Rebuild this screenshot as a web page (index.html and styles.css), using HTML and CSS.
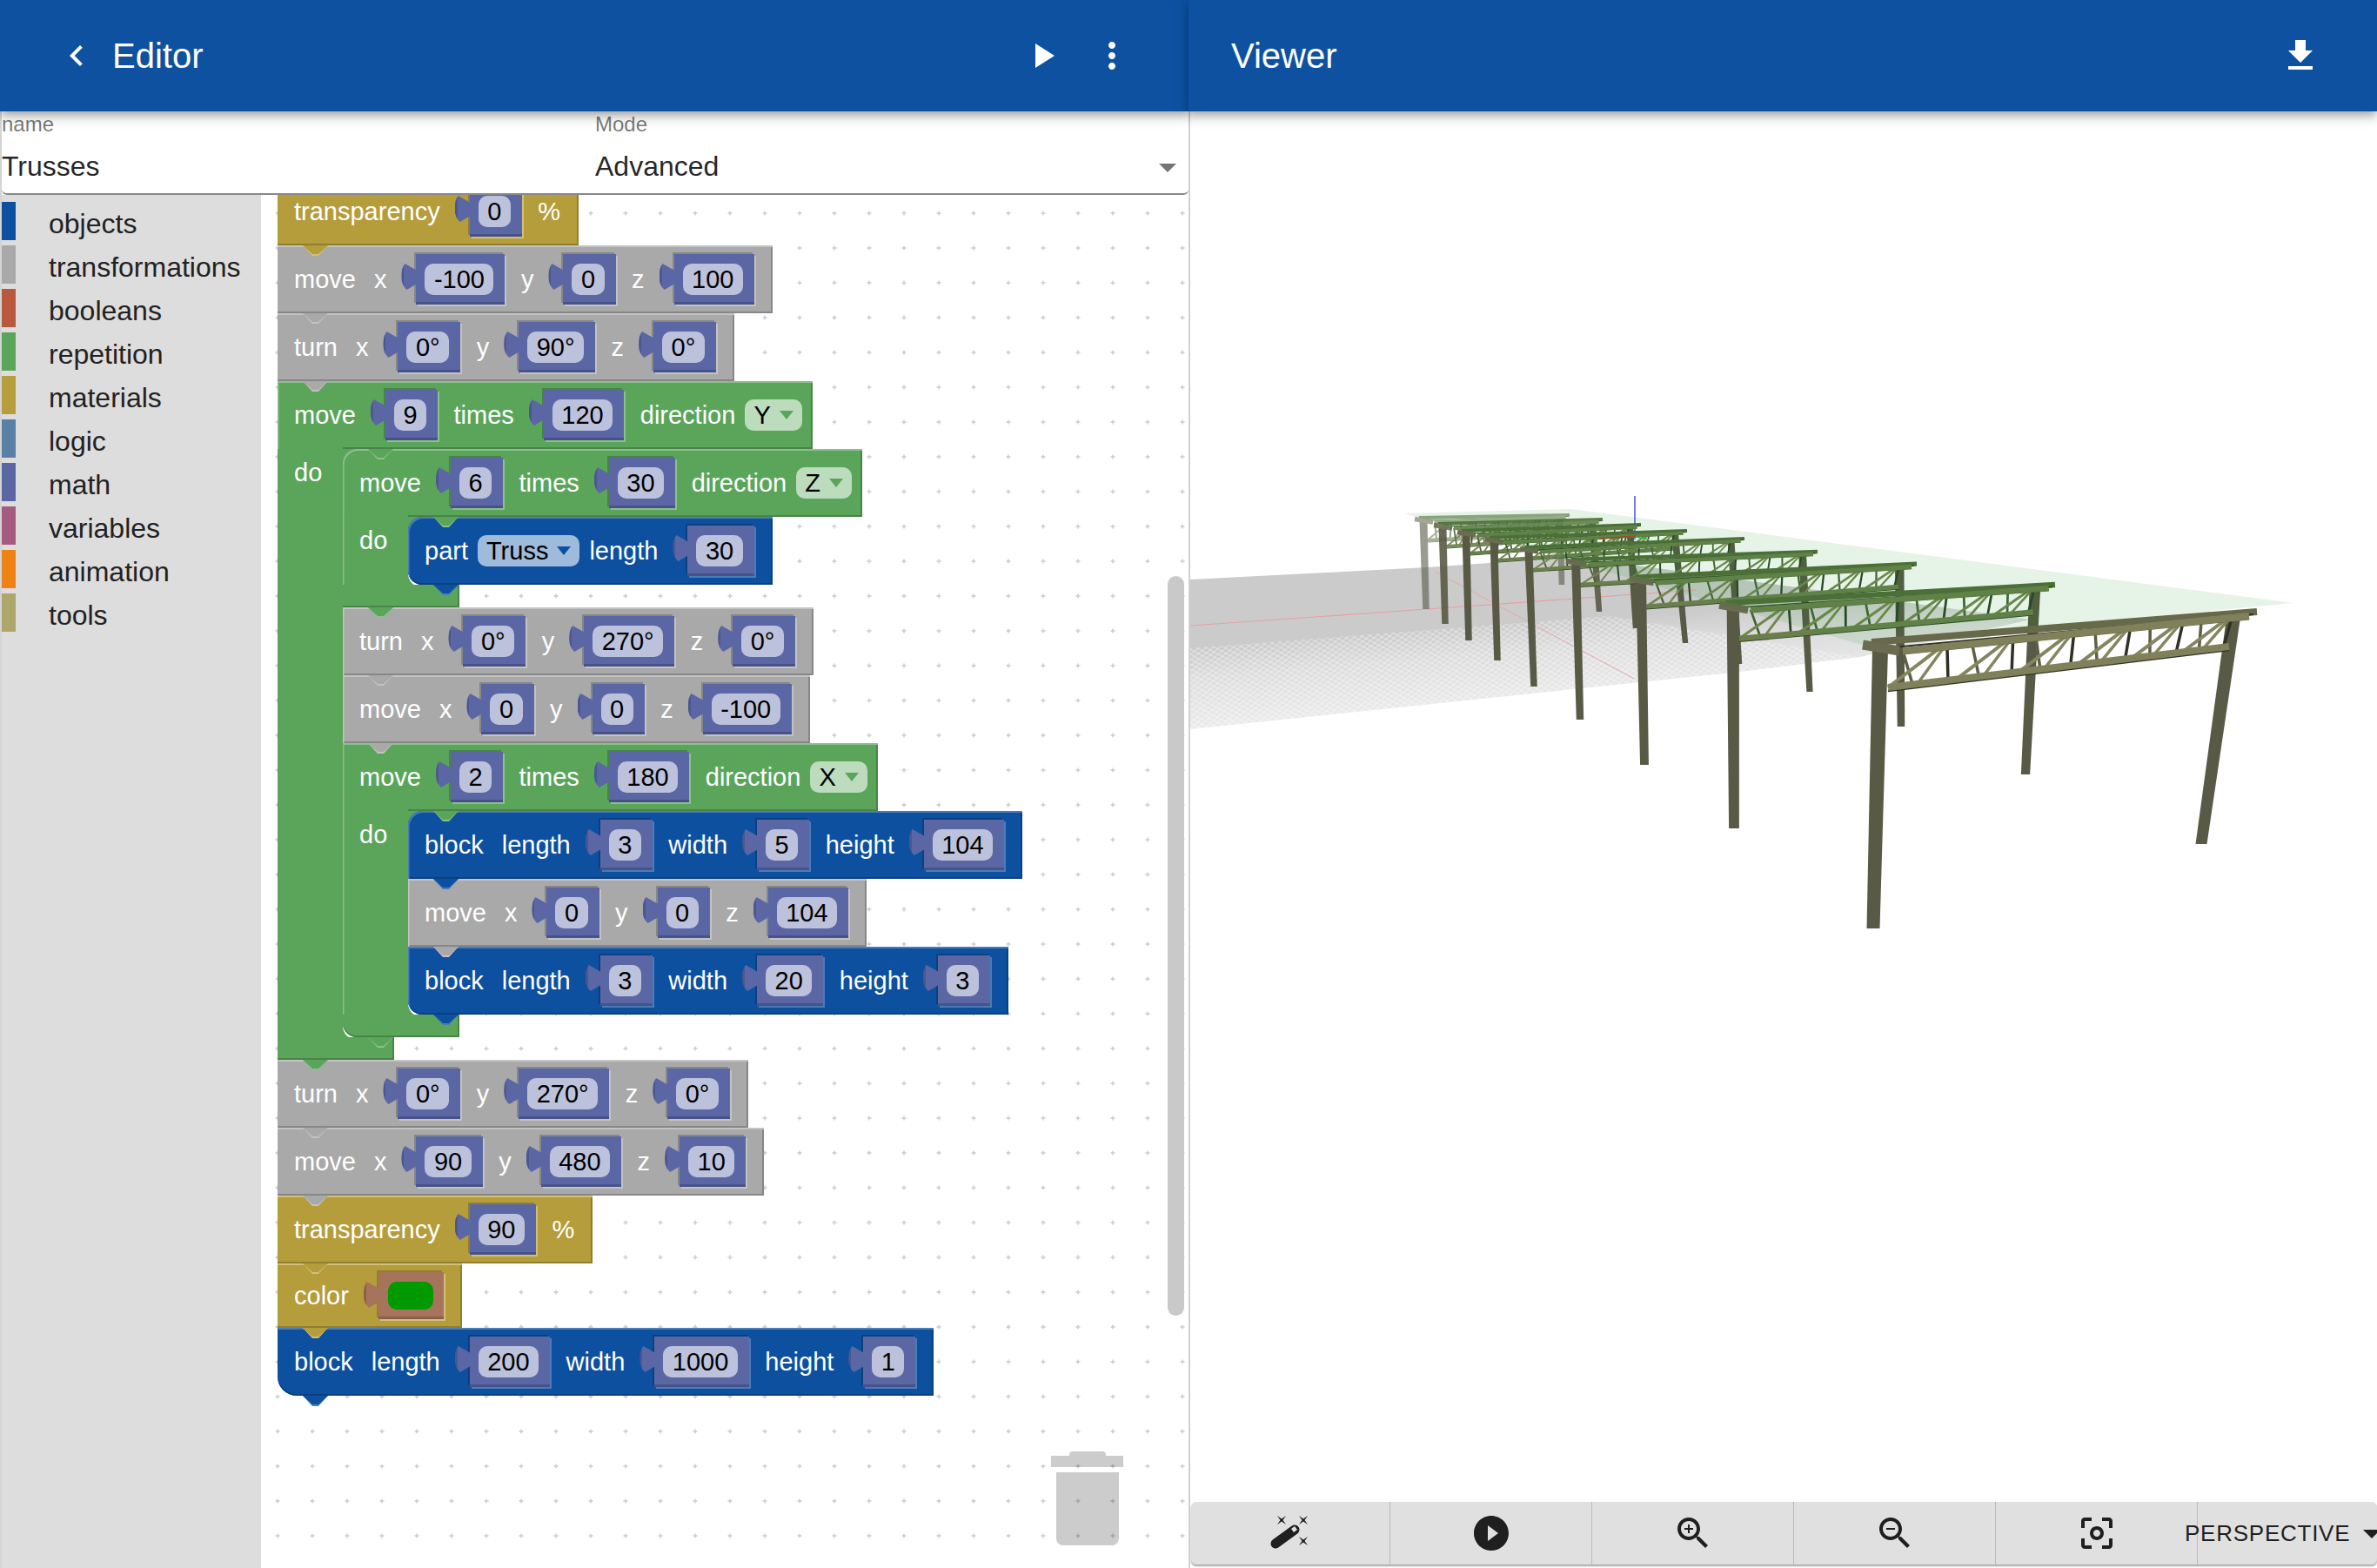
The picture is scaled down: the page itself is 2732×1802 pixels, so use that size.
FILE: index.html
```html
<!DOCTYPE html>
<html lang="en">
<head>
  <meta charset="UTF-8">
  <title>Trusses</title>
  <link rel="stylesheet" href="styles.css">
</head>
<body>
  <div class="app">

    <!-- Left: block editor -->
    <section class="editor">
      <header class="appbar">
        <svg class="icon back" viewBox="0 0 24 24"><path d="M15.41 7.41L14 6l-6 6 6 6 1.41-1.41L10.83 12z"/></svg>
        <h1 class="title">Editor</h1>
        <svg class="icon run" viewBox="0 0 24 24"><path d="M8 5v14l11-7z"/></svg>
        <svg class="icon more" viewBox="0 0 24 24"><path d="M12 8c1.1 0 2-.9 2-2s-.9-2-2-2-2 .9-2 2 .9 2 2 2zm0 2c-1.1 0-2 .9-2 2s.9 2 2 2 2-.9 2-2-.9-2-2-2zm0 6c-1.1 0-2 .9-2 2s.9 2 2 2 2-.9 2-2-.9-2-2-2z"/></svg>
      </header>

      <div class="form">
        <div class="form-field name-field">
          <label class="form-label">name</label>
          <div class="form-value">Trusses</div>
        </div>
        <div class="form-field mode-field">
          <label class="form-label">Mode</label>
          <div class="form-value">Advanced</div>
          <svg class="select-arrow" viewBox="0 0 24 24"><path d="M7 10l5 5 5-5z"/></svg>
        </div>
      </div>

      <div class="main">
        <ul class="toolbox">
          <li class="cat"><i class="swatch c-objects"></i>objects</li>
          <li class="cat"><i class="swatch c-transformations"></i>transformations</li>
          <li class="cat"><i class="swatch c-booleans"></i>booleans</li>
          <li class="cat"><i class="swatch c-repetition"></i>repetition</li>
          <li class="cat"><i class="swatch c-materials"></i>materials</li>
          <li class="cat"><i class="swatch c-logic"></i>logic</li>
          <li class="cat"><i class="swatch c-math"></i>math</li>
          <li class="cat"><i class="swatch c-variables"></i>variables</li>
          <li class="cat"><i class="swatch c-animation"></i>animation</li>
          <li class="cat"><i class="swatch c-tools"></i>tools</li>
        </ul>

        <div class="workspace">
          <svg class="grid">
            <defs>
              <pattern id="dots" width="40" height="40" patternUnits="userSpaceOnUse">
                <path d="M16.5 21h5M19 18.5v5" stroke="#ccc" stroke-width="1.4" fill="none"/>
              </pattern>
            </defs>
            <rect width="100%" height="100%" fill="url(#dots)"/>
          </svg>

          <div class="canvas">
            <div class="block gold"><span class="lbl">transparency</span><span class="slot"><span class="field">0</span></span><span class="lbl">%</span></div>
            <div class="block gray"><span class="lbl">move</span><span class="lbl">x</span><span class="slot"><span class="field">-100</span></span><span class="lbl">y</span><span class="slot"><span class="field">0</span></span><span class="lbl">z</span><span class="slot"><span class="field">100</span></span></div>
            <div class="block gray"><span class="lbl">turn</span><span class="lbl">x</span><span class="slot"><span class="field">0°</span></span><span class="lbl">y</span><span class="slot"><span class="field">90°</span></span><span class="lbl">z</span><span class="slot"><span class="field">0°</span></span></div>

            <div class="c green">
              <div class="block"><span class="lbl">move</span><span class="slot"><span class="field">9</span></span><span class="lbl">times</span><span class="slot"><span class="field">120</span></span><span class="lbl">direction</span><span class="drop">Y<i class="caret"></i></span></div>
              <div class="do">
                <span class="do-label">do</span>
                <div class="stmts">
                  <div class="c green">
                    <div class="block"><span class="lbl">move</span><span class="slot"><span class="field">6</span></span><span class="lbl">times</span><span class="slot"><span class="field">30</span></span><span class="lbl">direction</span><span class="drop">Z<i class="caret"></i></span></div>
                    <div class="do">
                      <span class="do-label">do</span>
                      <div class="stmts">
                        <div class="block blue"><span class="lbl">part</span><span class="drop">Truss<i class="caret"></i></span><span class="lbl">length</span><span class="slot"><span class="field">30</span></span></div>
                      </div>
                    </div>
                    <div class="foot"></div>
                  </div>
                  <div class="block gray"><span class="lbl">turn</span><span class="lbl">x</span><span class="slot"><span class="field">0°</span></span><span class="lbl">y</span><span class="slot"><span class="field">270°</span></span><span class="lbl">z</span><span class="slot"><span class="field">0°</span></span></div>
                  <div class="block gray"><span class="lbl">move</span><span class="lbl">x</span><span class="slot"><span class="field">0</span></span><span class="lbl">y</span><span class="slot"><span class="field">0</span></span><span class="lbl">z</span><span class="slot"><span class="field">-100</span></span></div>
                  <div class="c green">
                    <div class="block"><span class="lbl">move</span><span class="slot"><span class="field">2</span></span><span class="lbl">times</span><span class="slot"><span class="field">180</span></span><span class="lbl">direction</span><span class="drop">X<i class="caret"></i></span></div>
                    <div class="do">
                      <span class="do-label">do</span>
                      <div class="stmts">
                        <div class="block blue"><span class="lbl">block</span><span class="lbl">length</span><span class="slot"><span class="field">3</span></span><span class="lbl">width</span><span class="slot"><span class="field">5</span></span><span class="lbl">height</span><span class="slot"><span class="field">104</span></span></div>
                        <div class="block gray"><span class="lbl">move</span><span class="lbl">x</span><span class="slot"><span class="field">0</span></span><span class="lbl">y</span><span class="slot"><span class="field">0</span></span><span class="lbl">z</span><span class="slot"><span class="field">104</span></span></div>
                        <div class="block blue"><span class="lbl">block</span><span class="lbl">length</span><span class="slot"><span class="field">3</span></span><span class="lbl">width</span><span class="slot"><span class="field">20</span></span><span class="lbl">height</span><span class="slot"><span class="field">3</span></span></div>
                      </div>
                    </div>
                    <div class="foot"></div>
                  </div>
                </div>
              </div>
              <div class="foot"></div>
            </div>

            <div class="block gray"><span class="lbl">turn</span><span class="lbl">x</span><span class="slot"><span class="field">0°</span></span><span class="lbl">y</span><span class="slot"><span class="field">270°</span></span><span class="lbl">z</span><span class="slot"><span class="field">0°</span></span></div>
            <div class="block gray"><span class="lbl">move</span><span class="lbl">x</span><span class="slot"><span class="field">90</span></span><span class="lbl">y</span><span class="slot"><span class="field">480</span></span><span class="lbl">z</span><span class="slot"><span class="field">10</span></span></div>
            <div class="block gold"><span class="lbl">transparency</span><span class="slot"><span class="field">90</span></span><span class="lbl">%</span></div>
            <div class="block gold short"><span class="lbl">color</span><span class="slot color-slot"><span class="field color-field"></span></span></div>
            <div class="block blue end"><span class="lbl">block</span><span class="lbl">length</span><span class="slot"><span class="field">200</span></span><span class="lbl">width</span><span class="slot"><span class="field">1000</span></span><span class="lbl">height</span><span class="slot"><span class="field">1</span></span></div>
          </div>

          <div class="scrollbar"></div>
          <div class="trash">
            <i class="trash-handle"></i>
            <i class="trash-lid"></i>
            <i class="trash-body"></i>
          </div>
        </div>
      </div>
    </section>

    <!-- Right: 3D viewer -->
    <section class="viewer">
      <header class="appbar">
        <h1 class="title viewer-title">Viewer</h1>
        <svg class="icon download" viewBox="0 0 24 24"><path d="M19 9h-4V3H9v6H5l7 7 7-7zM5 18v2h14v-2H5z"/></svg>
      </header>

      <div class="stage">
        <svg class="scene" viewBox="1368 128 1364 1598">
          <defs>
            <linearGradient id="floor" gradientUnits="userSpaceOnUse" x1="1620" y1="690" x2="1630" y2="815">
              <stop offset="0.3" stop-color="#cbcbcb"/>
              <stop offset="0.55" stop-color="#dcdcdc"/>
              <stop offset="1" stop-color="#eaeaea"/>
            </linearGradient>
            <pattern id="mesh" width="9" height="6" patternUnits="userSpaceOnUse" patternTransform="rotate(-6)">
              <path d="M0 0L9 6M9 0L0 6" stroke="#fff" stroke-width="1" fill="none"/>
            </pattern>
          </defs>
          <polygon points="1368,666 1640,652 1810,640 2335,712 2138,755 2000,772 1368,838" fill="url(#floor)"/>
          <polygon points="1368,745 1850,708 2138,755 2000,772 1368,838" fill="url(#mesh)" opacity="0.55"/>
          <path d="M1368 719L1640 700L1950 678" stroke="#e8a0a0" stroke-width="1.2" fill="none"/>
          <path d="M1650 657L1878 780" stroke="#e8a8a8" stroke-width="1" fill="none"/>
          <path d="M1879 570V620" stroke="#3b46d8" stroke-width="1.4" fill="none"/>
          <g id="frames-back"></g>
          <path d="M1838 619L1880 616" stroke="#c0392b" stroke-width="1.6" fill="none"/>
          <path d="M1880 617L1895 620" stroke="#36c24a" stroke-width="1.6" fill="none"/>
          <polygon points="1614,590 1806,585 2636,693 2140,741" fill="#0a961e" opacity="0.1"/>
          <g id="frames-front"></g>
        </svg>
      </div>

      <div class="toolbar">
        <div class="tool">
          <svg class="tool-icon" viewBox="0 0 48 48">
            <path d="M7 36L29 20" stroke="#1f1f1f" stroke-width="11" stroke-linecap="round" fill="none"/>
            <path d="M25 19L29 16L32 20L28 23Z" fill="#e0e0e0"/>
            <path d="M9 4L14 7.500L19 4L15.500 9L19 14L14 10.500L9 14L12.500 9Z"/>
            <path d="M34 4L39 7.500L44 4L40.500 9L44 14L39 10.500L34 14L37.500 9Z"/>
            <path d="M34 28L39 31.500L44 28L40.500 33L44 38L39 34.500L34 38L37.500 33Z"/>
          </svg>
        </div>
        <div class="tool">
          <svg class="tool-icon" viewBox="0 0 24 24"><path d="M12 2C6.48 2 2 6.48 2 12s4.480 10 10 10 10-4.480 10-10S17.520 2 12 2zm-2 14.500v-9l6 4.500-6 4.500z"/></svg>
        </div>
        <div class="tool">
          <svg class="tool-icon" viewBox="0 0 24 24"><path d="M15.500 14h-.79l-.28-.27C15.410 12.590 16 11.110 16 9.500 16 5.910 13.090 3 9.500 3S3 5.910 3 9.500 5.910 16 9.500 16c1.610 0 3.090-.59 4.230-1.570l.27.28v.79l5 4.990L20.490 19l-4.990-5zm-6 0C7.010 14 5 11.990 5 9.500S7.010 5 9.500 5 14 7.010 14 9.500 11.990 14 9.500 14z"/><path d="M12 10h-2v2H9v-2H7V9h2V7h1v2h2v1z"/></svg>
        </div>
        <div class="tool">
          <svg class="tool-icon" viewBox="0 0 24 24"><path d="M15.500 14h-.79l-.28-.27C15.410 12.590 16 11.110 16 9.500 16 5.910 13.090 3 9.500 3S3 5.910 3 9.500 5.910 16 9.500 16c1.610 0 3.090-.59 4.230-1.570l.27.28v.79l5 4.990L20.490 19l-4.990-5zm-6 0C7.010 14 5 11.990 5 9.500S7.010 5 9.500 5 14 7.010 14 9.500 11.990 14 9.500 14zM7 9h5v1H7z"/></svg>
        </div>
        <div class="tool">
          <svg class="tool-icon" viewBox="0 0 24 24"><path d="M5 15H3v4c0 1.100.9 2 2 2h4v-2H5v-4zM5 5h4V3H5c-1.100 0-2 .9-2 2v4h2V5zm14-2h-4v2h4v4h2V5c0-1.100-.9-2-2-2zm0 16h-4v2h4c1.100 0 2-.9 2-2v-4h-2v4zM12 8c-2.210 0-4 1.790-4 4s1.790 4 4 4 4-1.790 4-4-1.790-4-4-4zm0 6c-1.100 0-2-.9-2-2s.9-2 2-2 2 .9 2 2-.9 2-2 2z"/></svg>
        </div>
        <div class="projection">
          <span>PERSPECTIVE</span>
          <svg class="projection-arrow" viewBox="0 0 24 24"><path d="M7 10l5 5 5-5z"/></svg>
        </div>
      </div>
    </section>

  </div>
  <script src="scene.js"></script>
</body>
</html>
```

FILE: styles.css
```css
* {
  box-sizing: border-box;
}

body {
  margin: 0;
  font-family: "Liberation Sans", Arial, sans-serif;
  background: #fff;
}

.app {
  display: flex;
  height: 100vh;
  overflow: hidden;
}

.editor {
  width: 1366px;
  display: flex;
  flex-direction: column;
  border-left: 2px solid #d4d4d4;
}

.viewer {
  flex: 1;
  min-width: 0;
  display: flex;
  flex-direction: column;
  border-left: 2px solid #d0d0d0;
}

/* top bars */
.appbar {
  flex: none;
  height: 128px;
  display: flex;
  align-items: center;
  background: #0d51a0;
  color: #fff;
  position: relative;
  z-index: 5;
  box-shadow: 0 4px 8px -2px rgba(0,0,0,0.2), 0 8px 10px 0 rgba(0,0,0,0.14), 0 2px 20px 0 rgba(0,0,0,0.12);
}

.editor .appbar {
  margin-left: -2px;
}

.viewer .appbar {
  margin-left: -2px;
}

.title {
  margin: 0;
  font-size: 40px;
  font-weight: 400;
}

.viewer-title {
  margin-left: 49px;
}

.icon {
  width: 48px;
  height: 48px;
  fill: #fff;
  flex: none;
}

.back {
  margin-left: 64px;
  margin-right: 17px;
}

.run {
  margin-left: auto;
}

.more {
  margin-left: 32px;
  margin-right: 64px;
}

.download {
  margin-left: auto;
  margin-right: 64px;
}

/* name / mode row */
.form {
  flex: none;
  height: 96px;
  display: flex;
  border-bottom: 2px solid #888;
  border-radius: 0 0 6px 6px;
}

.form-field {
  position: relative;
  height: 100%;
}

.name-field {
  width: 682px;
}

.mode-field {
  flex: 1;
}

.form-label {
  display: block;
  font-size: 24px;
  line-height: 28px;
  color: rgba(0,0,0,0.54);
  margin-top: 1px;
}

.form-value {
  font-size: 32px;
  line-height: 38px;
  margin-top: 15px;
  color: rgba(0,0,0,0.87);
}

.select-arrow {
  position: absolute;
  right: 0;
  top: 40px;
  width: 48px;
  height: 48px;
  fill: #757575;
}

.main {
  flex: 1;
  min-height: 0;
  display: flex;
}

/* category list */
.toolbox {
  width: 298px;
  flex: none;
  margin: 0;
  padding: 8px 0 0;
  list-style: none;
  background: #ddd;
}

.cat {
  height: 44px;
  margin-bottom: 6px;
  padding-top: 7px;
  display: flex;
  align-items: center;
  font-size: 32px;
  color: #222;
}

.swatch {
  width: 16px;
  height: 44px;
  margin-top: -7px;
  margin-right: 38px;
  align-self: flex-start;
}

.c-objects { background: #0d50a0; }
.c-transformations { background: #a9a9a9; }
.c-booleans { background: #b9583d; }
.c-repetition { background: #5ba55b; }
.c-materials { background: #b59e3b; }
.c-logic { background: #5b80a5; }
.c-math { background: #5b67a5; }
.c-variables { background: #a55b80; }
.c-animation { background: #ef8215; }
.c-tools { background: #afa66b; }

/* blockly area */
.workspace {
  flex: 1;
  position: relative;
  overflow: hidden;
  background: #fff;
}

.grid {
  position: absolute;
  left: 0;
  top: 0;
  width: 100%;
  height: 100%;
}

.canvas {
  position: absolute;
  left: 19px;
  top: -20px;
  display: flex;
  flex-direction: column;
  align-items: flex-start;
  font-size: 29px;
}

.gold { --bg: #b59d3b; --lt: #d2c07a; --dk: #917e2f; }
.gray { --bg: #a9a9a9; --lt: #c3c3c3; --dk: #878787; }
.green { --bg: #5ba55b; --lt: #8cc08c; --dk: #488448; }
.blue { --bg: #0d50a0; --lt: #4a7cb8; --dk: #0a4080; }

.block {
  position: relative;
  height: 78px;
  display: flex;
  align-items: center;
  gap: 18px;
  padding: 0 21px 0 19px;
  background: var(--bg);
  color: #fff;
  box-shadow: inset 0 2px 0 var(--lt), inset 0 -2px 0 var(--dk), inset -2px 0 0 var(--dk);
  white-space: nowrap;
}

.block.short {
  height: 74px;
}

.block.end {
  border-bottom-left-radius: 22px;
}

.stmts > .block {
  box-shadow: inset 1.5px 2px 0 var(--lt), inset 0 -2px 0 var(--dk), inset -2px 0 0 var(--dk);
}

/* header row of a "do" block: the dark edge stops at the left column */
.c > .block {
  background: linear-gradient(to right, transparent 75px, var(--dk) 75px) left bottom / 100% 2px no-repeat, var(--bg);
  box-shadow: inset 1.5px 2px 0 var(--lt), inset -2px 0 0 var(--dk);
}

/* the tab that hangs under each block */
.block::before,
.block::after,
.foot::before,
.foot::after {
  content: "";
  position: absolute;
  left: 29px;
  width: 29px;
  clip-path: polygon(0 0, 100% 0, 62% 100%, 38% 100%);
  z-index: 3;
}

.block::before,
.foot::before {
  top: 100%;
  height: 12px;
  background: var(--lt);
}

.block::after,
.foot::after {
  top: 100%;
  height: 10px;
  background: var(--bg);
}

.c > .block::before,
.c > .block::after {
  left: 104px;
}

.lbl + .lbl {
  margin-left: 3px;
}

.slot + .lbl {
  margin-left: 0.5px;
}

.slot {
  position: relative;
  margin-left: 16px;
  height: 58px;
  padding: 11px 13px 11px 10px;
  background: #5b67a5;
  box-shadow: inset 0 -3px 0 #48528a, 2px 2px 0 var(--lt), -2px -2px 0 var(--dk);
}

/* puzzle connector on the left of a value slot */
.slot::before {
  content: "";
  position: absolute;
  left: -17px;
  top: 11px;
  width: 18px;
  height: 30px;
  background: linear-gradient(to right, #4c5690 3px, #5b67a5 3px);
  clip-path: path("M18 8L4 0Q0 4 0 15Q0 25 6 30L18 23Z");
}

.field {
  display: block;
  height: 36px;
  line-height: 36px;
  padding: 0 10.500px;
  border-radius: 10px;
  background: #bdc2dc;
  color: #000;
}

.color-slot {
  height: 54px;
  width: 75px;
  padding: 11px;
  background: #a5745b;
  box-shadow: inset 0 -3px 0 #8a5f49, 2px 2px 0 var(--lt), -2px -2px 0 var(--dk);
}

.color-slot::before {
  background: linear-gradient(to right, #8a5f49 3px, #a5745b 3px);
}

.color-field {
  width: 52px;
  height: 32px;
  background: #009900;
}

.drop {
  display: flex;
  align-items: center;
  height: 36px;
  margin-left: -7px;
  margin-right: -7px;
  padding: 0 10px 0 10px;
  border-radius: 10px;
  color: #000;
}

.green .drop { background: #bddcbd; }
.blue .drop { background: #9fbbdc; }

.drop:last-child {
  margin-right: -9px;
}

.caret {
  width: 0;
  height: 0;
  margin-left: 10px;
  border-left: 8px solid transparent;
  border-right: 8px solid transparent;
  border-top: 10px solid var(--bg);
}

.c {
  display: flex;
  flex-direction: column;
  align-items: flex-start;
}

.do {
  display: flex;
  align-items: stretch;
}

.do-label {
  width: 75px;
  padding-left: 19px;
  line-height: 54px;
  color: #fff;
  background: var(--bg);
  box-shadow: 20px 0 0 var(--bg);
}

.stmts .do-label {
  box-shadow: 20px 0 0 var(--bg), inset 1.5px 0 0 var(--lt);
}

.stmts {
  position: relative;
  display: flex;
  flex-direction: column;
  align-items: flex-start;
}

/* pale corner showing behind the last inner block */
.stmts::before {
  content: "";
  position: absolute;
  left: 0;
  bottom: -3px;
  width: 34px;
  height: 24px;
  background: #fff;
  border-bottom-left-radius: 16px;
}

.stmts > .block:first-child,
.stmts > .c:first-child > .block {
  border-top-left-radius: 16px;
}

.stmts > .block:last-child,
.stmts > .c:last-child > .foot {
  border-bottom-left-radius: 16px;
}

.foot {
  position: relative;
  width: 134px;
  height: 26px;
  background: var(--bg);
  box-shadow: inset 0 -2px 0 var(--dk), inset -2px 0 0 var(--dk);
}

.scrollbar {
  position: absolute;
  left: 1042px;
  top: 438px;
  width: 19px;
  height: 850px;
  border-radius: 10px;
  background: #c9c9c9;
}

.trash {
  position: absolute;
  left: 908px;
  top: 1444px;
  width: 83px;
  display: flex;
  flex-direction: column;
  align-items: center;
}

.trash i {
  display: block;
  background: rgba(0,0,0,0.2);
}

.trash-handle {
  width: 42px;
  height: 5px;
  border-radius: 4px 4px 0 0;
}

.trash-lid {
  width: 83px;
  height: 13px;
}

.trash-body {
  width: 72px;
  height: 84px;
  margin-top: 6px;
  border-radius: 0 0 8px 8px;
}

/* 3D view */
.stage {
  flex: 1;
  min-height: 0;
  position: relative;
}

.scene {
  display: block;
  width: 100%;
  height: 100%;
  filter: blur(0.7px);
}

.toolbar {
  flex: none;
  height: 72px;
  margin-bottom: 4px;
  margin-left: 1px;
  display: flex;
  background: #e0e0e0;
  border-radius: 6px;
  box-shadow: 0 2px 2px rgba(0,0,0,0.35);
  overflow: hidden;
}

.tool {
  width: 232px;
  flex: none;
  display: flex;
  align-items: center;
  justify-content: center;
  border-right: 1px solid #bbb;
}

.tool:first-child {
  width: 229px;
}

.tool-icon {
  width: 48px;
  height: 48px;
  fill: #1f1f1f;
}

.projection {
  flex: none;
  display: flex;
  align-items: center;
  margin-left: -15px;
  font-size: 26px;
  letter-spacing: 0.75px;
  color: #1f1f1f;
}

.projection-arrow {
  width: 48px;
  height: 48px;
  margin-left: 1px;
  fill: #1f1f1f;
}
```

FILE: scene.js
```js
// portal frames, far to near: left top, right end, left foot, right foot
const frames = [
  [1626, 595, 1804, 592, 1639, 700, 1795, 672],
  [1648, 602, 1842, 597, 1661, 717, 1838, 703],
  [1675, 610, 1886, 603, 1688, 736, 1880, 722],
  [1707, 618, 1939, 610, 1721, 759, 1937, 739],
  [1747, 629, 2005, 619, 1763, 789, 1999, 763],
  [1800, 643, 2089, 634, 1816, 827, 2080, 795],
  [1873, 663, 2203, 648, 1890, 879, 2185, 835],
  [1976, 693, 2362, 672, 1993, 952, 2328, 890],
  [2141, 738, 2594, 703, 2153, 1067, 2530, 970]
];

const DARK = "#2f3128";
const POST = "#585a45";

function line(x1, y1, x2, y2, color, width, cap) {
  return `<line x1="${x1}" y1="${y1}" x2="${x2}" y2="${y2}" stroke="${color}" stroke-width="${width}" stroke-linecap="${cap || "butt"}"/>`;
}

function post(x1, y1, w1, x2, y2, w2, color) {
  return `<polygon points="${x1 - w1 / 2},${y1} ${x1 + w1 / 2},${y1} ${x2 + w2 / 2},${y2} ${x2 - w2 / 2},${y2}" fill="${color}"/>`;
}

function drawFrame(f, index) {
  const [x0, y0, x1, y1, bx, by, rx, ry] = f;
  const s = Math.max((by - y0) / 329, 0.5);
  const near = index === frames.length - 1;
  const rail = near ? "#80815b" : "#6a7f4c";
  const rear = near ? "#66694a" : "#526c3a";
  const brace = near ? "#85865f" : "#738650";
  const brace2 = near ? "#5d6044" : "#466236";
  const dark = near ? DARK : "#2a4426";
  let out = "";

  // far post
  const rtx = x0 + (x1 - x0) * 0.94;
  const rty = y0 + (y1 - y0) * 0.94 + 6 * s;
  out += post(rtx, rty, 16 * s, rx, ry, 13 * s, POST);

  // chord end points
  const ax = x0 + 46 * s, ay = y0 + 10 * s;
  const ex = x1 - 9 * s, ey = y1 + 5 * s;
  const cx = x0 + 29 * s, cy = y0 + 52 * s;
  const dx = x1 - 32 * s, dy = y1 + 40 * s;

  // panels get narrower toward the far end
  const warp = (t) => t / (t + 0.8 * (1 - t));
  const panels = 6;
  for (let k = 0; k < panels; k++) {
    const u0 = warp(k / panels);
    const u1 = warp((k + 1) / panels);
    const top = (t) => {
      const u = u0 + (u1 - u0) * t;
      return [ax + (ex - ax) * u, ay + (ey - ay) * u];
    };
    const bot = (t) => {
      const u = u0 + (u1 - u0) * t;
      return [cx + (dx - cx) * u, cy + (dy - cy) * u];
    };
    out += line(...top(0), ...bot(0.36), brace2, 3.5 * s);
    out += line(...bot(0), ...top(0.55), brace, 4 * s);
    out += line(...bot(0.43), ...top(0.6), brace, 3.5 * s);
    out += line(...top(0.64), ...bot(0.88), dark, 3.5 * s);
  }

  // chords
  out += line(x0 + 10 * s, y0, x1, y1, rear, 8 * s);
  out += line(x0 + 34 * s, y0 + 6 * s, x1 - 4 * s, y1 + 3 * s, dark, 2 * s);
  out += line(cx, cy + 4 * s, dx, dy + 4 * s, dark, 2.5 * s);
  out += line(cx, cy, dx, dy, rail, 8 * s);
  out += line(ax, ay + 3 * s, ex, ey + 3 * s, rear, 3 * s);
  out += line(ax, ay, ex, ey, rail, 8 * s);

  // near post and its cap sit in front of the truss
  out += post(x0 + 20 * s, y0 + 8 * s, 18 * s, bx, by, 15 * s, POST);
  out += line(x0, y0 + 3 * s, x0 + 42 * s, y0 + 10 * s, "#6a6b50", 11 * s);

  const opacity = index === 0 ? 0.6 : index === 1 ? 0.9 : 1;
  return `<g opacity="${opacity}">${out}</g>`;
}

document.getElementById("frames-back").innerHTML =
  frames.slice(0, -1).map(drawFrame).join("");
document.getElementById("frames-front").innerHTML =
  drawFrame(frames[frames.length - 1], frames.length - 1);
```
